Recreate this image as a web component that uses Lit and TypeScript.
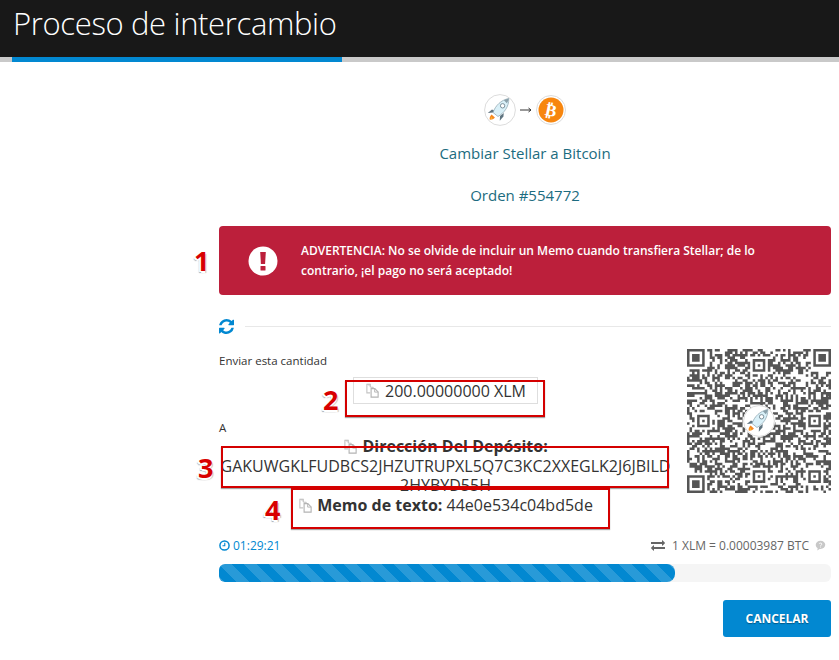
import { LitElement, html, css, svg } from "lit";
import { customElement } from "lit/decorators.js";

const N = 57;
function qrCells(): string {
  let seed = 554772;
  const rnd = () => {
    seed = (seed * 1664525 + 1013904223) >>> 0;
    return (seed >>> 16) / 65536;
  };
  const finder = (x: number, y: number, ox: number, oy: number, s: number) => {
    const dx = x - ox, dy = y - oy;
    if (dx < -1 || dy < -1 || dx > s || dy > s) return -1;
    if (dx < 0 || dy < 0 || dx >= s || dy >= s) return 0;
    if (dx === 0 || dy === 0 || dx === s - 1 || dy === s - 1) return 1;
    if (s === 7 && (dx === 1 || dy === 1 || dx === 5 || dy === 5)) return 0;
    if (s === 5 && (dx === 1 || dy === 1 || dx === 3 || dy === 3)) return 0;
    return 1;
  };
  const areas: [number, number, number][] = [
    [0, 0, 7], [N - 7, 0, 7], [0, N - 7, 7],
    [N - 9, N - 9, 5], [26, 4, 5], [4, 26, 5], [26, N - 9, 5], [N - 9, 26, 5],
  ];
  let d = "";
  for (let y = 0; y < N; y++) {
    for (let x = 0; x < N; x++) {
      let v = -1;
      for (const [ox, oy, s] of areas) {
        const r = finder(x, y, ox, oy, s);
        if (r >= 0) { v = r; break; }
      }
      if (v < 0) v = rnd() < 0.52 ? 1 : 0;
      if (v) d += `M${x} ${y}h1v1h-1z`;
    }
  }
  return d;
}
const QR_PATH = qrCells();

const rocket = (size: number) => html`<svg width=${size} height=${size} viewBox="0 0 32 32" aria-hidden="true">
  <circle cx="16" cy="16" r="15.4" fill="#fff" stroke="#dcdcdc" stroke-width="1"/>
  <path d="M8 15.5 3.8 19l5.2-.4 2-1.5z" fill="#5f7480"/>
  <path d="M16 22l-.2 4.7 3.6-4.3.4-3.4z" fill="#5f7480"/>
  <path d="M7.6 20.4c-1.7 1.4-2.2 3.7-1.9 5.2 1.7.3 3.9-.5 5.2-2.2z" fill="#f6871f"/>
  <path d="M7.2 23c-.4.8-.5 1.5-.4 1.9.6 0 1.3-.2 1.9-.7z" fill="#fbc02d"/>
  <path d="M9 18.5C11.500 11.500 17 6 24.800 4.500 25 13 20 19 14 22.500z" fill="#d9f0f8" stroke="#8aa0aa" stroke-width=".7"/>
  <path d="M24.800 4.500c-1.800.3-3.400.9-4.900 1.700l2.900 3.100c1-1.300 1.800-3 2-4.800z" fill="#8aa0aa"/>
  <circle cx="18.600" cy="11.800" r="2.200" fill="#fff" stroke="#6f8590" stroke-width=".9"/>
</svg>`;

const copyIcon = html`<svg class="copy" viewBox="0 0 16 16" aria-hidden="true">
  <path d="M6 1.500H2v9h3.500" fill="none" stroke="#c4c4c4" stroke-width="1.200"/>
  <path d="M2.200 1.500h3.600v3h3V7" fill="#dcdcdc" stroke="#c4c4c4" stroke-width="1"/>
  <path d="M6.500 6h4l3.500 3.500v5.500H6.500z" fill="#fff" stroke="#b4b4b4" stroke-width="1.200"/>
  <path d="M10.300 6v3.700H14" fill="none" stroke="#b4b4b4" stroke-width="1"/>
</svg>`;

const annotation = (n: string, cls: string) => html`<span class="num ${cls}">${n}</span>`;

@customElement("app-root")
export class AppRoot extends LitElement {
  static styles = css`
    :host {
      display: block;
      width: 839px;
      height: 660px;
      overflow: hidden;
      background: #fff;
      font-family: "Open Sans", "Liberation Sans", sans-serif;
      color: #333;
      position: relative;
    }
    .head {
      height: 57px;
      background: #181818;
      color: #fff;
      box-sizing: border-box;
      padding-left: 13px;
      font-size: 31px;
      font-weight: 300;
      line-height: 46px;
      letter-spacing: -0.35px;
    }
    .track { height: 5px; background: #c9c9c9; padding-left: 12px; }
    .track div { width: 330px; height: 5px; background: #0288d1; }
    .main { margin-left: 219px; width: 612px; }
    .pair {
      display: flex;
      justify-content: center;
      align-items: center;
      gap: 4px;
      padding-top: 32px;
      height: 32px;
      margin-right: 0;
      color: #333;
    }
    .pair svg { display: block; }
    .arrow { width: 12px; height: 6px; }
    .hd {
      text-align: center;
      color: #1c6c80;
      font-size: 15px;
      line-height: 20px;
      letter-spacing: 0;
    }
    .h1 { margin-top: 17px; }
    .h2 { margin-top: 22px; }
    .alert {
      margin-top: 21px;
      height: 69px;
      border-radius: 4px;
      background: #bc1f3b;
      color: #fff;
      display: flex;
      align-items: center;
      padding: 0 30px 0 29px;
      gap: 23px;
      font-size: 12px;
      font-weight: 600;
      line-height: 20px;
      box-sizing: border-box;
    }
    .alert svg { flex: none; width: 30px; height: 30px; }
    .sep { display: flex; align-items: center; gap: 11px; margin-top: 23px; height: 16px; }
    .sep svg { width: 15px; height: 15px; flex: none; }
    .sep i { flex: 1; height: 1px; background: #e8e8e8; }
    .body { display: flex; justify-content: space-between; margin-top: 17px; }
    .left { width: 453px; font-size: 11.500px; line-height: 18px; }
    .label { color: #333; }
    .label.send { margin-top: 1px; }
    .amount-row { display: flex; justify-content: center; margin-top: 7px; }
    .amount {
      border: 1px solid #dedede;
      height: 27px;
      width: 185px;
      box-sizing: border-box;
      display: flex;
      align-items: center;
      justify-content: center;
      gap: 5px;
      font-size: 16px;
      color: #333;
    }
    .copy { width: 15px; height: 15px; display: inline-block; vertical-align: -2px; }
    .label.a { margin-top: 17px; line-height: 14px; }
    .addr {
      text-align: center;
      font-size: 16px;
      line-height: 19.500px;
      color: #333;
      margin: 2px -3px 0;
    }
    .addr b { font-weight: 700; }
    .addr span { word-break: break-all; }
    .qr { width: 144px; height: 144px; position: relative; flex: none; margin-top: -2px; }
    .qr > svg { display: block; }
    .qr .logo { position: absolute; left: 56px; top: 56px; background: #fff; border-radius: 50%; width: 32px; height: 32px; }
    .meta {
      display: flex;
      justify-content: space-between;
      align-items: center;
      margin-top: 21px;
      height: 18px;
      font-size: 12px;
    }
    .timer { color: #0288d1; display: flex; align-items: center; gap: 3px; }
    .timer svg { width: 11px; height: 11px; }
    .rate { color: #666; display: flex; align-items: center; gap: 6px; padding-right: 5px; }
    .rate svg.ex { width: 14px; height: 14px; margin-right: 1px; }
    .rate svg.q { width: 11px; height: 11px; }
    .bar { margin-top: 10px; height: 18px; border-radius: 6px; background: #f5f5f5; overflow: hidden; }
    .fill {
      height: 18px;
      border-radius: 0 8px 8px 0;
      background-color: #0288d1;
      background-image: linear-gradient(45deg,
        rgba(255,255,255,.15) 25%, transparent 25%, transparent 50%,
        rgba(255,255,255,.15) 50%, rgba(255,255,255,.15) 75%, transparent 75%, transparent);
      background-size: 25px 25px;
      transform: scaleY(1);
    }
    .actions { display: flex; justify-content: flex-end; margin-top: 18px; }
    button {
      width: 108px;
      height: 37px;
      border: 0;
      border-radius: 3px;
      background: #0288d1;
      color: #fff;
      font: 700 12px "Open Sans", sans-serif;
      text-shadow: 0 1px 1px rgba(0,0,0,.35);
      padding: 0;
    }
    .box { position: absolute; border: 2px solid #d40000; box-sizing: border-box; box-shadow: 0 1px 1px rgba(0,0,0,.35); }
    .b2 { left: 345px; top: 380px; width: 200px; height: 37px; }
    .b3 { left: 221px; top: 446px; width: 448px; height: 42px; }
    .b4 { left: 291px; top: 488px; width: 319px; height: 41px; }
    .num {
      position: absolute;
      color: #d80000;
      font: 700 27px/30px "Open Sans", sans-serif;
      text-shadow: -2px 1px 0 #fff, 0 2px 0 #fff, -2px 2px 1px #aaa, 1px 2px 1px #bbb;
    }
    .n1 { left: 194px; top: 246px; }
    .n2 { left: 323px; top: 385px; }
    .n3 { left: 198px; top: 453px; }
    .n4 { left: 265px; top: 495px; }
  `;

  render() {
    return html`
      <div class="head">Proceso de intercambio</div>
      <div class="track"><div></div></div>
      <div class="main">
        <div class="pair">
          ${rocket(32)}
          <svg class="arrow" viewBox="0 0 12 6" aria-hidden="true"><path d="M0 3h11M8.500 1 11 3 8.500 5" fill="none" stroke="#333" stroke-width="1"/></svg>
          <svg width="30" height="30" viewBox="0 0 30 30" aria-hidden="true">
            <circle cx="15" cy="15" r="14.500" fill="#fff" stroke="#dcdcdc"/>
            <circle cx="15" cy="15" r="12.500" fill="#f7860f"/>
            <text x="15" y="21" text-anchor="middle" font-family="DejaVu Sans" font-weight="700" font-size="17" fill="#fff" transform="rotate(12 15 15)">₿</text>
          </svg>
        </div>
        <div class="hd h1">Cambiar Stellar a Bitcoin</div>
        <div class="hd h2">Orden #554772</div>
        <div class="alert">
          <svg viewBox="0 0 30 30" aria-hidden="true">
            <circle cx="15" cy="15" r="14.500" fill="#fff"/>
            <path d="M12.200 6h5.600l-.7 12h-4.200z" fill="#bc1f3b"/>
            <rect x="12.500" y="20" width="5" height="4.500" rx=".6" fill="#bc1f3b"/>
          </svg>
          <div>ADVERTENCIA: No se olvide de incluir un Memo cuando transfiera Stellar; de lo contrario, ¡el pago no será aceptado!</div>
        </div>
        <div class="sep">
          <svg viewBox="0 0 1536 1536" aria-hidden="true"><path fill="#0288d1" d="M1511 928q0 5-1 7-64 268-268 434.500t-478 166.500q-146 0-282.500-55t-243.500-157l-129 129q-19 19-45 19t-45-19-19-45v-448q0-26 19-45t45-19h448q26 0 45 19t19 45-19 45l-137 137q71 66 161 102t187 36q134 0 250-65t186-179q11-17 53-117 8-23 30-23h192q13 0 22.500 9.500t9.500 22.500zm25-800v448q0 26-19 45t-45 19h-448q-26 0-45-19t-19-45 19-45l138-138q-148-137-349-137-134 0-250 65t-186 179q-11 17-53 117-8 23-30 23h-199q-13 0-22.500-9.500t-9.500-22.500v-7q65-268 270-434.500t480-166.500q146 0 284 55.500t245 156.500l130-129q19-19 45-19t45 19 19 45z"/></svg>
          <i></i>
        </div>
        <div class="body">
          <div class="left">
            <div class="label send">Enviar esta cantidad</div>
            <div class="amount-row"><div class="amount">${copyIcon}<span>200.00000000 XLM</span></div></div>
            <div class="label a">A</div>
            <div class="addr">
              <div>${copyIcon} <b>Dirección Del Depósito:</b></div>
              <div><span>GAKUWGKLFUDBCS2JHZUTRUPXL5Q7C3KC2XXEGLK2J6JBILD2HYBYD55H</span></div>
              <div>${copyIcon} <b>Memo de texto:</b> 44e0e534c04bd5de</div>
            </div>
          </div>
          <div class="qr">
            <svg width="144" height="144" viewBox="0 0 ${N} ${N}" shape-rendering="auto" aria-hidden="true">${svg`<path d=${QR_PATH} fill="#555"/>`}</svg>
            <div class="logo">${rocket(32)}</div>
          </div>
        </div>
        <div class="meta">
          <div class="timer">
            <svg viewBox="0 0 12 12" aria-hidden="true"><circle cx="6" cy="6" r="5" fill="none" stroke="#0288d1" stroke-width="1.600"/><path d="M6.300 3v3.300H3.800" fill="none" stroke="#0288d1" stroke-width="1.200"/></svg>
            <span>01:29:21</span>
          </div>
          <div class="rate">
            <svg class="ex" viewBox="0 0 1792 1792" aria-hidden="true"><path fill="#666" d="M1792 1184v192q0 13-9.500 22.500t-22.500 9.500h-1376v192q0 13-9.500 22.500t-22.500 9.500q-12 0-24-10l-319-320q-9-9-9-22 0-14 9-23l320-320q9-9 23-9 13 0 22.500 9.500t9.500 22.500v192h1376q13 0 22.500 9.500t9.500 22.500zm0-544q0 14-9 23l-320 320q-9 9-23 9-13 0-22.500-9.500t-9.500-22.500v-192h-1376q-13 0-22.500-9.500t-9.500-22.500v-192q0-13 9.500-22.500t22.500-9.500h1376v-192q0-14 9-23t23-9q12 0 24 10l319 319q9 9 9 23z"/></svg>
            <span>1 XLM = 0.00003987 BTC</span>
            <svg class="q" viewBox="0 0 12 12" aria-hidden="true"><path d="M6 .8c3 0 5.200 2 5.200 4.500S9 9.800 6 9.800H5L2.500 11.400l.4-2.400C1.500 8.200.8 6.900.8 5.300.8 2.800 3 .8 6 .8z" fill="#c8c8c8"/><path d="M4.500 4.200c.2-1 2.800-1.200 3 .2.100 1-1.500 1.100-1.500 2M6 7.200v1" fill="none" stroke="#fff" stroke-width="1"/></svg>
          </div>
        </div>
        <div class="bar"><div class="fill" style="width:${(456 / 612) * 100}%"></div></div>
        <div class="actions"><button>CANCELAR</button></div>
      </div>
      <div class="box b2"></div>
      <div class="box b3"></div>
      <div class="box b4"></div>
      ${annotation("1", "n1")}
      ${annotation("2", "n2")}
      ${annotation("3", "n3")}
      ${annotation("4", "n4")}
    `;
  }
}
